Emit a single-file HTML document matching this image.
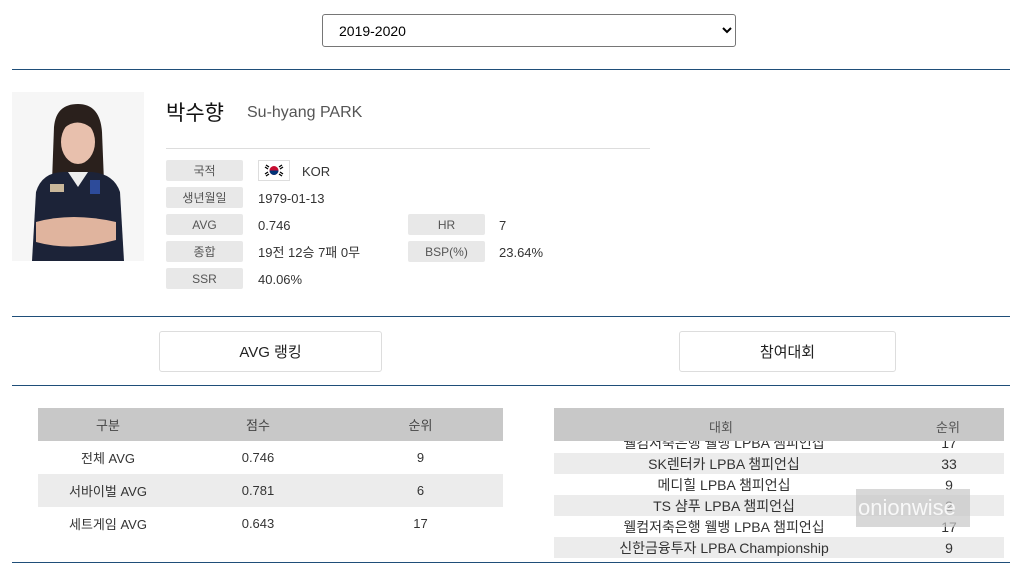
<!DOCTYPE html>
<html><head><meta charset="utf-8"><style>
*{margin:0;padding:0;box-sizing:border-box}
body{width:1010px;height:567px;background:#fff;font-family:"Liberation Sans","Noto Sans CJK KR",sans-serif;color:#333;position:relative;overflow:hidden}
.abs{position:absolute}
.line{position:absolute;left:12px;width:998px;height:1px;background:#1f4e79}
select{position:absolute;left:322px;top:14px;width:414px;height:33px;border:1px solid #767676;border-radius:3px;background:#fff;font-size:14px;padding-left:12px;color:#000;font-family:"Liberation Sans",sans-serif}
.lab{position:absolute;width:77px;height:21px;background:#e8e8e8;border-radius:2px;font-size:12px;color:#555;text-align:center;line-height:23px}
.val{position:absolute;font-size:13px;color:#333;line-height:23px}
.btn{position:absolute;height:41px;border:1px solid #ddd;border-radius:3px;font-size:15px;text-align:center;line-height:42px;color:#222}
table{border-collapse:collapse;position:absolute;font-size:13px}
td,th{text-align:center;font-weight:normal}
</style></head><body>
<select><option>2019-2020</option></select>
<div class="line" style="top:69px"></div>
<svg class="abs" style="left:12px;top:92px" width="132" height="169" viewBox="0 0 132 169">
<rect width="132" height="169" fill="#f6f6f6"/>
<path d="M42 35 Q44 12 66 12 Q88 12 90 40 L92 90 L40 90 Z" fill="#2a201c"/>
<ellipse cx="66" cy="50" rx="17" ry="22" fill="#e8c0ad"/>
<path d="M50 38 Q66 22 84 40 L84 30 Q66 16 48 32Z" fill="#2a201c"/>
<path d="M24 100 Q30 80 52 80 L80 80 Q102 82 108 100 L112 169 L20 169 Z" fill="#1c2338"/>
<path d="M56 80 L66 95 L76 80Z" fill="#eee"/>
<path d="M24 130 Q60 120 104 130 L104 148 Q60 160 24 150Z" fill="#e0b49e"/>
<rect x="38" y="92" width="14" height="8" fill="#c9b79a"/>
<rect x="78" y="88" width="10" height="14" fill="#2d4b9a"/>
</svg>
<div class="abs" style="left:166px;top:97px;font-size:21px;color:#111">박수향</div>
<div class="abs" style="left:247px;top:104px;font-size:16px;color:#555">Su-hyang PARK</div>
<div class="abs" style="left:166px;top:148px;width:484px;height:1px;background:#ddd"></div>
<div class="lab" style="left:166px;top:160px">국적</div>
<div class="abs" style="left:258px;top:160px;width:32px;height:21px;border:1px solid #ddd;background:#fff"><svg width="30" height="19" viewBox="0 0 30 19"><circle cx="15" cy="9.5" r="4.5" fill="#c60c30"/><path d="M10.5 9.5 A4.5 4.5 0 0 0 19.5 9.5Z" fill="#003478"/><g stroke="#000" stroke-width="1.3"><path d="M7 4l3 2M6 6l3 2M20 6l3-2M21 8l3-2M7 15l3-2M6 13l3-2M20 13l3 2M21 11l3 2"/></g></svg></div>
<div class="val" style="left:302px;top:160px">KOR</div>
<div class="lab" style="left:166px;top:187px">생년월일</div>
<div class="val" style="left:258px;top:187px">1979-01-13</div>
<div class="lab" style="left:166px;top:214px">AVG</div>
<div class="val" style="left:258px;top:214px">0.746</div>
<div class="lab" style="left:408px;top:214px">HR</div>
<div class="val" style="left:499px;top:214px">7</div>
<div class="lab" style="left:166px;top:241px">종합</div>
<div class="val" style="left:258px;top:241px">19전 12승 7패 0무</div>
<div class="lab" style="left:408px;top:241px">BSP(%)</div>
<div class="val" style="left:499px;top:241px">23.64%</div>
<div class="lab" style="left:166px;top:268px">SSR</div>
<div class="val" style="left:258px;top:268px">40.06%</div>
<div class="line" style="top:316px"></div>
<div class="btn" style="left:159px;top:331px;width:223px">AVG 랭킹</div>
<div class="btn" style="left:679px;top:331px;width:217px">참여대회</div>
<div class="line" style="top:385px"></div>
<table style="left:38px;top:408px;width:465px">
<tr style="background:#c8c8c8;height:33px;color:#444"><th style="width:140px">구분</th><th style="width:160px">점수</th><th>순위</th></tr>
<tr style="height:33px"><td>전체 AVG</td><td>0.746</td><td>9</td></tr>
<tr style="height:33px;background:#ececec"><td>서바이벌 AVG</td><td>0.781</td><td>6</td></tr>
<tr style="height:33px"><td>세트게임 AVG</td><td>0.643</td><td>17</td></tr>
</table>
<div class="abs" style="left:554px;top:408px;width:450px;height:150px;overflow:hidden">
<div class="abs" style="left:0;top:0;width:450px;height:33px;background:#c8c8c8;font-size:13px;color:#555;z-index:2"><span class="abs" style="left:155px;top:9px">대회</span><span class="abs" style="left:382px;top:9px">순위</span></div>
<table style="left:0;top:24px;width:450px;font-size:14px;color:#333">
<tr style="height:21px"><td style="width:340px">웰컴저축은행 웰뱅 LPBA 챔피언십</td><td>17</td></tr>
<tr style="height:21px;background:#ececec"><td>SK렌터카 LPBA 챔피언십</td><td>33</td></tr>
<tr style="height:21px"><td>메디힐 LPBA 챔피언십</td><td>9</td></tr>
<tr style="height:21px;background:#ececec"><td>TS 샴푸 LPBA 챔피언십</td><td>2</td></tr>
<tr style="height:21px"><td>웰컴저축은행 웰뱅 LPBA 챔피언십</td><td>17</td></tr>
<tr style="height:21px;background:#ececec"><td>신한금융투자 LPBA Championship</td><td>9</td></tr>
</table>
</div>
<div class="abs" style="left:856px;top:489px;width:114px;height:38px;background:rgba(200,200,200,0.7);font-size:22px;color:rgba(255,255,255,0.85);line-height:38px;padding-left:2px">onionwise</div>
<div class="line" style="top:562px"></div>
</body></html>
